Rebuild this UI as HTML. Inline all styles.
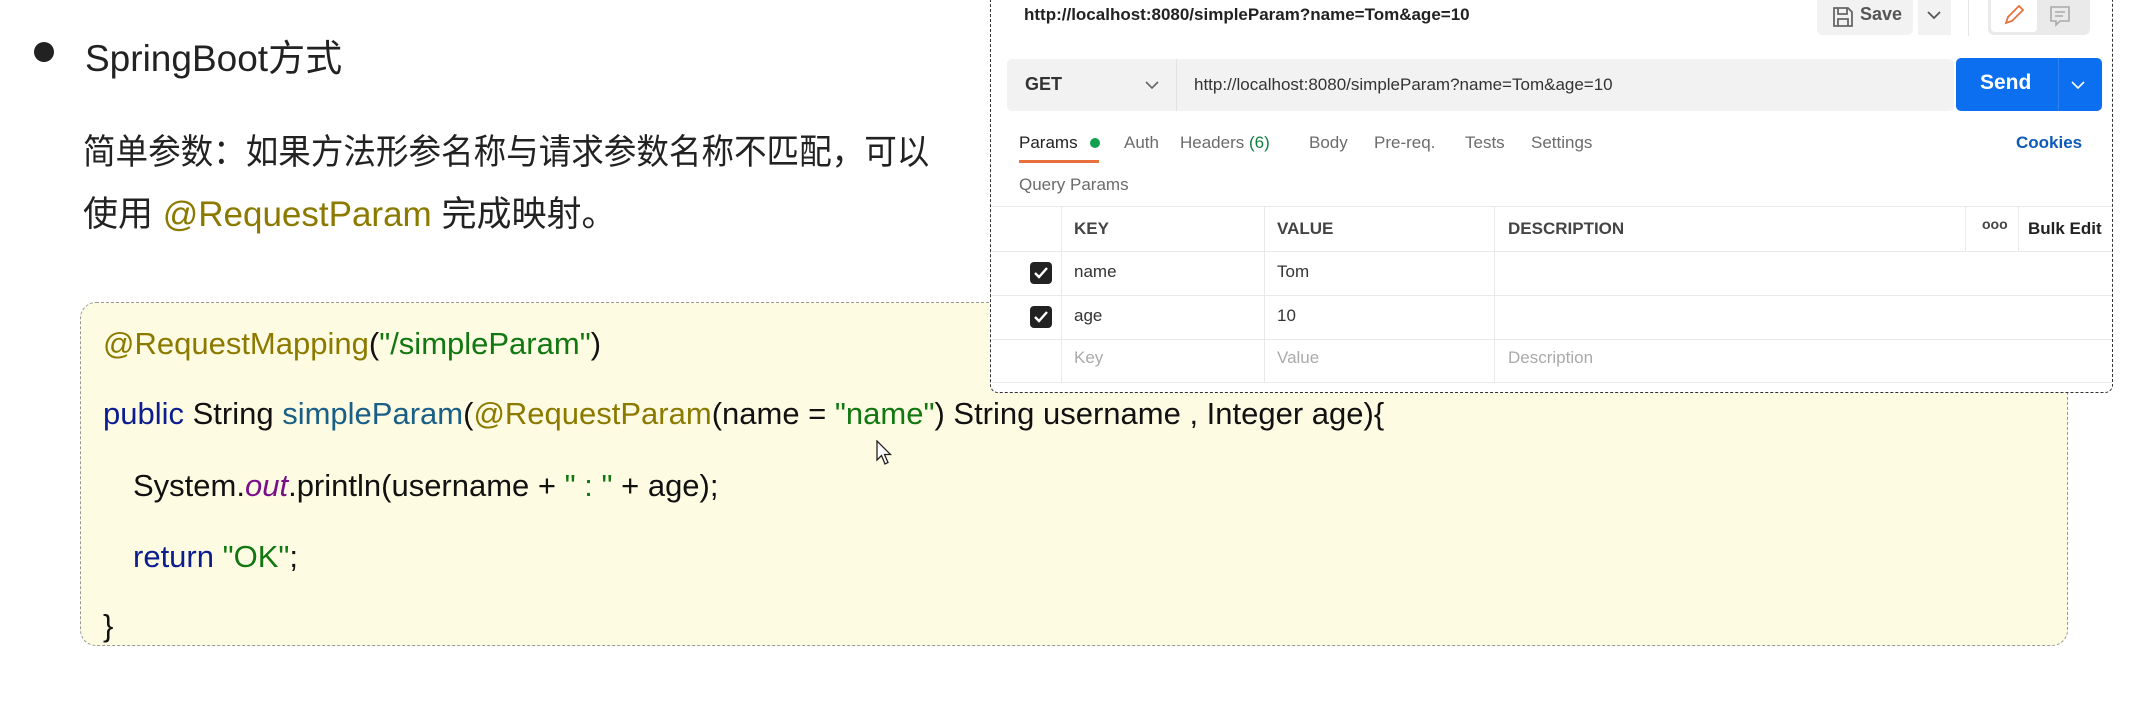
<!DOCTYPE html>
<html><head><meta charset="utf-8"><style>
*{margin:0;padding:0;box-sizing:border-box}
body{width:2140px;height:728px;background:#fff;position:relative;overflow:hidden;font-family:"Liberation Sans","Noto Sans CJK SC",sans-serif;color:#222}
.a{position:absolute;white-space:nowrap}
.code{font-size:31px;line-height:40px;color:#111}
.an{color:#8c7a00}.st{color:#117711}.kw{color:#0b1d8f}.mn{color:#1a5f86}.ot{color:#7a0f8a;font-style:italic}
.pm{font-size:17px;color:#333}
.g{color:#6b6b6b}
.hl{position:absolute;background:#e9e9e9;height:1px}
.vl{position:absolute;background:#e9e9e9;width:1px}
.cb{position:absolute;width:22px;height:22px;background:#222;border-radius:4px}
</style></head><body>
<div class="a" style="left:34px;top:42px;width:20px;height:20px;border-radius:50%;background:#222"></div>
<div class="a" style="left:85px;top:28px;font-size:37px;color:#222">SpringBoot方式</div>
<div class="a" style="left:83px;top:124px;font-size:35px;transform:scaleX(0.93);transform-origin:0 0">简单参数：如果方法形参名称与请求参数名称不匹配，可以</div>
<div class="a" style="left:83px;top:186px;font-size:35px">使用 <span class="an">@RequestParam</span> 完成映射。</div>

<div class="a" style="left:80px;top:302px;width:1988px;height:344px;background:#fefbe3;border:1.5px dashed #999;border-radius:16px"></div>
<div class="a code" style="left:103px;top:324px"><span class="an">@RequestMapping</span>(<span class="st">"/simpleParam"</span>)</div>
<div class="a code" style="left:103px;top:394px"><span class="kw">public</span> String <span class="mn">simpleParam</span>(<span class="an">@RequestParam</span>(name = <span class="st">"name"</span>) String username , Integer age){</div>
<div class="a code" style="left:133px;top:466px">System.<span class="ot">out</span>.println(username + <span class="st">" : "</span> + age);</div>
<div class="a code" style="left:133px;top:537px"><span class="kw">return</span> <span class="st">"OK"</span>;</div>
<div class="a code" style="left:103px;top:606px">}</div>
<svg class="a" style="left:876px;top:440px" width="18" height="26" viewBox="0 0 18 26"><path d="M1 1 L1 20 L5.5 15.5 L9 24 L12 22.5 L8.5 14.5 L14.5 14.5 Z" fill="#fff" stroke="#222" stroke-width="1.3"/></svg>

<div class="a" style="left:990px;top:-4px;width:1123px;height:397px;background:#fff;border:1.5px dashed #333;border-top:none;border-radius:0 0 8px 8px"></div>
<div class="a" style="left:1024px;top:5px;font-size:17px;font-weight:bold;color:#222">http://localhost:8080/simpleParam?name=Tom&amp;age=10</div>
<div class="a" style="left:1817px;top:0;width:96px;height:35px;background:#f2f2f2;border-radius:0 0 5px 5px"></div>
<svg class="a" style="left:1832px;top:6px" width="22" height="22" viewBox="0 0 22 22"><path d="M2 2h14l4 4v14H2z M6 2v6h9V2 M6 20v-7h10v7" fill="none" stroke="#666" stroke-width="1.8"/></svg>
<div class="a" style="left:1860px;top:4px;font-size:18px;font-weight:bold;color:#555">Save</div>
<div class="a" style="left:1918px;top:0;width:33px;height:35px;background:#f2f2f2"></div>
<svg class="a" style="left:1927px;top:10px" width="14" height="10"><path d="M1 2l6 6 6-6" fill="none" stroke="#555" stroke-width="1.8"/></svg>
<div class="a" style="left:1968px;top:0;width:1px;height:36px;background:#e5e5e5"></div>
<div class="a" style="left:1988px;top:0;width:102px;height:35px;background:#eaeaea;border-radius:0 0 6px 6px"></div>
<div class="a" style="left:1991px;top:0;width:46px;height:32px;background:#fff;border-radius:0 0 4px 4px"></div>
<svg class="a" style="left:2003px;top:4px" width="22" height="22"><path d="M3 19l2-6 11-11 4 4-11 11z" fill="none" stroke="#e8703a" stroke-width="1.8"/></svg>
<svg class="a" style="left:2049px;top:5px" width="22" height="22"><path d="M2 2h18v14h-9l-4 4v-4H2z M6 7h10 M6 11h8" fill="none" stroke="#aaa" stroke-width="1.6"/></svg>

<div class="a" style="left:1007px;top:59px;width:947px;height:52px;background:#f2f2f2;border-radius:5px"></div>
<div class="a" style="left:1025px;top:74px;font-size:18px;font-weight:bold;color:#333">GET</div>
<svg class="a" style="left:1145px;top:80px" width="14" height="10"><path d="M1 2l6 6 6-6" fill="none" stroke="#666" stroke-width="1.6"/></svg>
<div class="a" style="left:1176px;top:59px;width:1px;height:52px;background:#e2e2e2"></div>
<div class="a" style="left:1194px;top:75px;font-size:17px;color:#333">http://localhost:8080/simpleParam?name=Tom&amp;age=10</div>
<div class="a" style="left:1956px;top:58px;width:146px;height:53px;background:#0b6ff0;border-radius:5px"></div>
<div class="a" style="left:1980px;top:71px;font-size:21px;font-weight:bold;color:#fff">Send</div>
<div class="a" style="left:2058px;top:58px;width:1px;height:53px;background:#2d82f0"></div>
<svg class="a" style="left:2071px;top:80px" width="14" height="10"><path d="M1 2l6 6 6-6" fill="none" stroke="#fff" stroke-width="1.6"/></svg>

<div class="a pm" style="left:1019px;top:133px;color:#222">Params</div>
<div class="a" style="left:1090px;top:138px;width:10px;height:10px;border-radius:50%;background:#10a050"></div>
<div class="a pm g" style="left:1124px;top:133px">Auth</div>
<div class="a pm g" style="left:1180px;top:133px">Headers <span style="color:#108040">(6)</span></div>
<div class="a pm g" style="left:1309px;top:133px">Body</div>
<div class="a pm g" style="left:1374px;top:133px">Pre-req.</div>
<div class="a pm g" style="left:1465px;top:133px">Tests</div>
<div class="a pm g" style="left:1531px;top:133px">Settings</div>
<div class="a pm" style="left:2016px;top:133px;font-weight:bold;color:#0d5ab8">Cookies</div>
<div class="a" style="left:1019px;top:160px;width:80px;height:3px;background:#e8703a"></div>
<div class="a pm g" style="left:1019px;top:175px">Query Params</div>

<div class="hl" style="left:992px;top:206px;width:1120px"></div>
<div class="hl" style="left:992px;top:251px;width:1120px"></div>
<div class="hl" style="left:992px;top:295px;width:1120px"></div>
<div class="hl" style="left:992px;top:339px;width:1120px"></div>
<div class="hl" style="left:992px;top:382px;width:1120px"></div>
<div class="vl" style="left:1061px;top:206px;height:176px"></div>
<div class="vl" style="left:1264px;top:206px;height:176px"></div>
<div class="vl" style="left:1494px;top:206px;height:176px"></div>
<div class="vl" style="left:1965px;top:206px;height:45px"></div>
<div class="vl" style="left:2018px;top:206px;height:45px"></div>
<div class="a pm" style="left:1074px;top:219px;font-weight:bold;color:#444">KEY</div>
<div class="a pm" style="left:1277px;top:219px;font-weight:bold;color:#444">VALUE</div>
<div class="a pm" style="left:1508px;top:219px;font-weight:bold;color:#444">DESCRIPTION</div>
<div class="a pm" style="left:1982px;top:216px;font-weight:bold;color:#444;font-size:14px">ooo</div>
<div class="a pm" style="left:2028px;top:219px;font-weight:bold;color:#222">Bulk Edit</div>
<div class="cb" style="left:1030px;top:262px"></div>
<svg class="a" style="left:1033px;top:265px" width="16" height="16"><path d="M2 8l4 4 8-9" fill="none" stroke="#fff" stroke-width="2.4"/></svg>
<div class="a pm" style="left:1074px;top:262px">name</div>
<div class="a pm" style="left:1277px;top:262px">Tom</div>
<div class="cb" style="left:1030px;top:306px"></div>
<svg class="a" style="left:1033px;top:309px" width="16" height="16"><path d="M2 8l4 4 8-9" fill="none" stroke="#fff" stroke-width="2.4"/></svg>
<div class="a pm" style="left:1074px;top:306px">age</div>
<div class="a pm" style="left:1277px;top:306px">10</div>
<div class="a pm" style="left:1074px;top:348px;color:#aaa">Key</div>
<div class="a pm" style="left:1277px;top:348px;color:#aaa">Value</div>
<div class="a pm" style="left:1508px;top:348px;color:#aaa">Description</div>
</body></html>
